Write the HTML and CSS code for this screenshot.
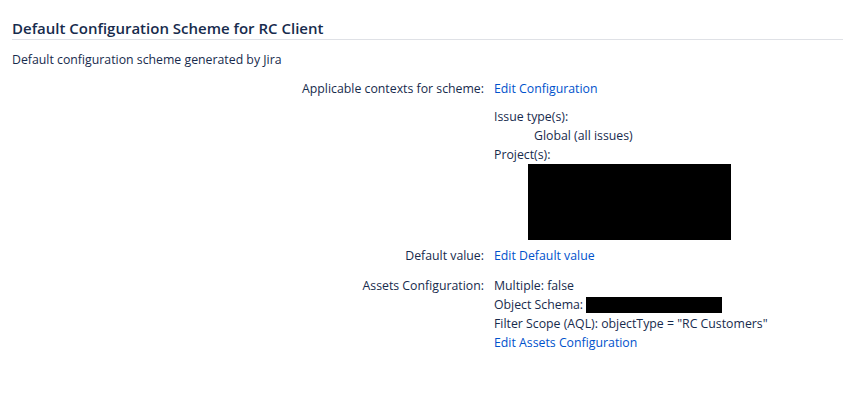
FILE: index.html
```html
<!DOCTYPE html>
<html>
<head>
<meta charset="utf-8">
<link rel="stylesheet" href="styles.css">
</head>
<body>
<div class="page">
  <h2 class="title">Default Configuration Scheme for RC Client</h2>
  <p class="desc">Default configuration scheme generated by Jira</p>
  <div class="cfg">
    <div class="lbl">Applicable contexts for scheme:</div>
    <div class="val">
      <a class="link" href="#">Edit Configuration</a>
      <div class="contexts">
        <div class="ctx-line">Issue type(s):</div>
        <div class="ctx-line indent">Global (all issues)</div>
        <div class="ctx-line">Project(s):</div>
        <div class="redact proj"></div>
      </div>
    </div>
    <div class="lbl row-default">Default value:</div>
    <div class="val row-default"><a class="link" href="#">Edit Default value</a></div>
    <div class="lbl row-assets">Assets Configuration:</div>
    <div class="val assets row-assets">
      <div>Multiple: false</div>
      <div>Object Schema: <span class="redact schema"></span></div>
      <div>Filter Scope (AQL): objectType = "RC Customers"</div>
      <div><a class="link" href="#">Edit Assets Configuration</a></div>
    </div>
  </div>
</div>
</body>
</html>
```

FILE: styles.css
```css
html, body {
  margin: 0;
  padding: 0;
  background: #fff;
}
body {
  font-family: "Open Sans", "Noto Sans", sans-serif;
  font-size: 12.3px;
  line-height: 19px;
  color: #172b4d;
}
.page {
  padding: 18px 0 0 12px;
}
.title {
  margin: 0;
  font-size: 15px;
  line-height: 20px;
  font-weight: 600;
  color: #172b4d;
  padding-bottom: 1px;
  border-bottom: 1px solid #dfe1e6;
}
.desc {
  margin: 10px 0 0;
}
.cfg {
  display: grid;
  grid-template-columns: 472px 1fr;
  column-gap: 10px;
  margin-top: 10px;
}
.lbl {
  text-align: right;
}
.row-default {
  margin-top: 6px;
}
.row-assets {
  margin-top: 11px;
}
.link {
  color: #0052cc;
  text-decoration: none;
}
.contexts {
  margin-top: 9px;
}
.ctx-line {
  line-height: 19px;
}
.indent {
  padding-left: 40px;
}
.redact {
  background: #000;
}
.proj {
  margin-left: 34px;
  width: 203px;
  height: 76px;
}
.schema {
  display: inline-block;
  width: 136px;
  height: 16px;
  vertical-align: -4px;
}
.assets {
  line-height: 19px;
}
```
